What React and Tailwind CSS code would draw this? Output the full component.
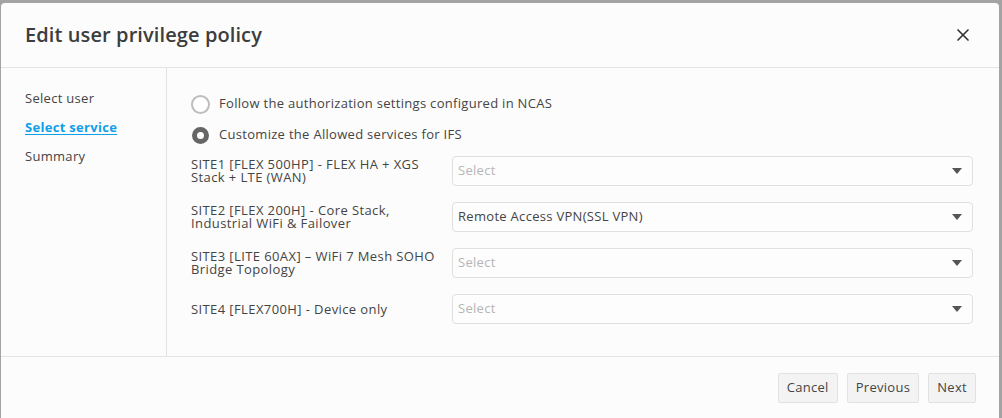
import { X } from "lucide-react";

const sites = [
  { id: "site1", label: "SITE1 [FLEX 500HP] - FLEX HA + XGS Stack + LTE (WAN)", value: "" },
  { id: "site2", label: "SITE2 [FLEX 200H] - Core Stack, Industrial WiFi & Failover", value: "Remote Access VPN(SSL VPN)" },
  { id: "site3", label: "SITE3 [LITE 60AX] – WiFi 7 Mesh SOHO Bridge Topology", value: "" },
  { id: "site4", label: "SITE4 [FLEX700H] - Device only", value: "" },
];

const steps = [
  { id: "user", label: "Select user" },
  { id: "service", label: "Select service", active: true },
  { id: "summary", label: "Summary" },
];

function Radio({ checked, children }) {
  return (
    <label className="flex items-center gap-[9px] h-[20px]">
      {checked ? (
        <span className="w-[17px] h-[17px] rounded-full border-[5px] border-[#666] bg-white ml-[1px] mr-[1px]" />
      ) : (
        <span className="w-[19px] h-[19px] rounded-full border-2 border-[#bdbdbd] bg-white" />
      )}
      <span className="text-[13px] tracking-[0.3px] text-[#444]">{children}</span>
    </label>
  );
}

function ServiceSelect({ value }) {
  return (
    <div className="flex-1 h-[30px] flex items-center justify-between pl-[5px] pr-[10px] border border-[#e0e0e0] rounded-[4px] bg-[#fdfdfd]">
      <span className={`text-[13px] tracking-[0.3px] ${value ? "text-[#444]" : "text-[#b5b5b5]"}`}>{value || "Select"}</span>
      <svg width="10" height="6" viewBox="0 0 10 6">
        <path d="M0 0h10L5 6z" fill="#555" />
      </svg>
    </div>
  );
}

export default function App() {
  return (
    <div className="w-[1002px] h-[418px] bg-[#a3a3a3] pt-[3px] pl-[1px] pr-[3px] overflow-hidden" style={{ fontFamily: "'Open Sans', sans-serif" }}>
      <div className="h-[420px] bg-[#fcfcfc] rounded-t-[4px] flex flex-col">
        {/* Header */}
        <div className="h-[65px] flex items-center justify-between pl-[24px] pr-[26px] border-b border-[#e3e3e3]">
          <h2 className="text-[20px] font-semibold text-[#3d3d3d] tracking-[0.1px]">Edit user privilege policy</h2>
          <X className="w-[20px] h-[20px] text-[#333]" strokeWidth={2} />
        </div>

        {/* Body */}
        <div className="h-[289px] flex border-b border-[#e3e3e3]">
          <nav className="w-[166px] border-r border-[#e3e3e3] pl-[24px] pt-[21px] flex flex-col gap-[11px]">
            {steps.map((s) => (
              <span
                key={s.id}
                className={`text-[13px] leading-[18px] tracking-[0.3px] ${s.active ? "font-bold text-[#10a0e8] underline underline-offset-2" : "text-[#444]"}`}
              >
                {s.label}
              </span>
            ))}
          </nav>

          <div className="flex-1 pl-[24px] pr-[26px] pt-[26px]">
            <div className="flex flex-col gap-[11px]">
              <Radio>Follow the authorization settings configured in NCAS</Radio>
              <Radio checked>Customize the Allowed services for IFS</Radio>
            </div>

            <div className="mt-[11px] flex flex-col gap-[16px]">
              {sites.map((s) => (
                <div key={s.id} className="flex items-center gap-[16px]">
                  <span className="w-[245px] text-[13px] leading-[13px] tracking-[0.4px] text-[#444]">{s.label}</span>
                  <ServiceSelect value={s.value} />
                </div>
              ))}
            </div>
          </div>
        </div>

        {/* Footer */}
        <div className="flex justify-end gap-[9px] pr-[23px] pt-[16px]">
          {["Cancel", "Previous", "Next"].map((b) => (
            <button
              key={b}
              className="h-[30px] px-[8px] text-[13px] tracking-[0.3px] text-[#444] bg-[#f3f3f3] border border-[#e2e2e2] rounded-[2px]"
            >
              {b}
            </button>
          ))}
        </div>
      </div>
    </div>
  );
}
